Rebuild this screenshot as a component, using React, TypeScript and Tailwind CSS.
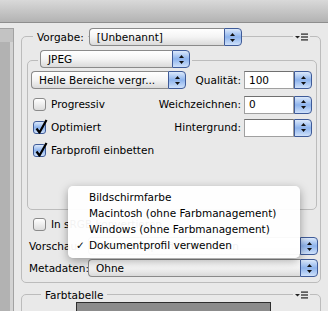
import React from 'react';

const Arrows = () => (
  <svg width="5" height="9" viewBox="0 0 5 9">
    <path d="M2.5 0 L5 3 L0 3 Z" fill="#111" />
    <path d="M0 6 L5 6 L2.5 9 Z" fill="#111" />
  </svg>
);

const ArrowBtn = () => (
  <div className="w-[18px] h-full flex items-center justify-center rounded-r-[4px] border border-[#3f5b98] bg-gradient-to-b from-[#dce9fb] via-[#8db3ec] to-[#cfe1fa]">
    <Arrows />
  </div>
);

function Select({ label, className }: { label: string; className: string }) {
  return (
    <div className={`flex h-[18px] ${className}`}>
      <div className="flex-1 flex items-center pl-[7px] rounded-l-[4px] border border-r-0 border-[#8a8a8a] bg-gradient-to-b from-white via-[#f4f4f4] to-[#dadada] whitespace-nowrap overflow-hidden">
        {label}
      </div>
      <ArrowBtn />
    </div>
  );
}

function Field({ label, value }: { label: string; value: string }) {
  return (
    <div className="flex items-center gap-[3px]">
      <span>{label}</span>
      <div className="flex h-[18px]">
        <div className="w-[50px] bg-white border border-[#a0a0a0] border-t-[#707070] pl-[4px] flex items-center">
          {value}
        </div>
        <ArrowBtn />
      </div>
    </div>
  );
}

function Checkbox({ label, checked }: { label: string; checked?: boolean }) {
  return (
    <div className="flex items-center ml-[2px]">
      {checked ? (
        <div className="relative w-[13px] h-[13px] rounded-[3px] border border-[#3f5b98] bg-gradient-to-b from-[#dce9fb] via-[#8db3ec] to-[#cfe1fa]">
          <svg className="absolute left-0 top-0 overflow-visible" width="13" height="13" viewBox="0 0 13 13">
            <path d="M2.5 6.5 L5.5 10.5 L12.5 -2" stroke="#000" strokeWidth="2.2" fill="none" strokeLinejoin="round" />
          </svg>
        </div>
      ) : (
        <div className="w-[13px] h-[13px] rounded-[3px] border border-[#8a8a8a] bg-gradient-to-b from-white to-[#dcdcdc]" />
      )}
      <span className="ml-[5px]">{label}</span>
    </div>
  );
}

const MenuIcon = () => (
  <div className="h-full flex items-center bg-[#e9e9e9] px-[2px]">
    <svg width="13" height="8" viewBox="0 0 13 8">
      <path d="M0 3 H5 L2.5 5.5 Z" fill="#222" />
      <rect x="6" y="0.5" width="7" height="1.2" fill="#222" />
      <rect x="6" y="3.4" width="7" height="1.2" fill="#222" />
      <rect x="6" y="6.3" width="7" height="1.2" fill="#222" />
    </svg>
  </div>
);

export default function App() {
  return (
    <div className="w-[328px] h-[311px] overflow-hidden relative bg-[#e9e9e9] text-black text-[10.5px] leading-none font-['DejaVu_Sans',sans-serif]">
      {/* title strip */}
      <div className="h-[23px] bg-gradient-to-b from-[#d9d9d9] to-[#b3b3b3] border-b border-[#8e8e8e]" />

      <div className="flex h-[288px]">
        {/* left panel edge */}
        <div className="w-[14px] pt-[5px]">
          <div className="h-full bg-[#c3c3c3] border-t border-r border-[#a2a2a2] pt-[13px]">
            <div className="h-full bg-[#b2b2b2] border-r-[3px] border-[#d3d3d3]" />
          </div>
        </div>
        <div className="w-[7px]" />

        <div className="w-[300px]">
          {/* Vorgabe group */}
          <div className="mt-[13px] h-[247px] border border-[#bcbcbc] rounded-[5px] flex flex-col">
            <div className="-mt-[9px] h-[18px] flex items-center pl-[11px]">
              <span className="h-full flex items-center bg-[#e9e9e9] px-[4px]">Vorgabe:</span>
              <Select label="[Unbenannt]" className="w-[153px] ml-[1px]" />
              <div className="flex-1" />
              <MenuIcon />
              <div className="w-[10px]" />
            </div>

            {/* JPEG group */}
            <div className="mt-[14px] ml-[5px] mr-[3px] h-[150px] border border-[#bcbcbc] rounded-[5px]">
              <div className="-mt-[11px] h-[18px] flex pl-[10px]">
                <div className="bg-[#e9e9e9] px-[2px] flex">
                  <Select label="JPEG" className="w-[150px]" />
                </div>
              </div>
              <div className="mt-[2px] pl-[3px] pr-[4px] flex flex-col">
                <div className="h-[20px] flex items-center justify-between">
                  <Select label="Helle Bereiche vergr..." className="w-[155px]" />
                  <Field label="Qualität:" value="100" />
                </div>
                <div className="mt-[3px] h-[23px] flex items-center justify-between">
                  <Checkbox label="Progressiv" />
                  <Field label="Weichzeichnen:" value="0" />
                </div>
                <div className="h-[23px] flex items-center justify-between">
                  <Checkbox label="Optimiert" checked />
                  <Field label="Hintergrund:" value="" />
                </div>
                <div className="h-[23px] flex items-center justify-between">
                  <Checkbox label="Farbprofil einbetten" checked />
                </div>
              </div>
            </div>

            <div className="mt-[8px] pl-[9px] h-[13px] flex items-center">
              <Checkbox label="In sRGB konvertieren" />
            </div>
            <div className="mt-[6px] pl-[7px] pr-[2px] flex items-center">
              <span className="w-[59px]">Vorschau:</span>
              <Select label="Dokumentprofil verwenden" className="flex-1" />
            </div>
            <div className="mt-[4px] pl-[7px] pr-[2px] flex items-center">
              <span className="w-[59px]">Metadaten:</span>
              <Select label="Ohne" className="flex-1" />
            </div>
          </div>

          {/* Farbtabelle group */}
          <div className="mt-[11px] h-[40px] border border-[#bcbcbc] rounded-[5px]">
            <div className="-mt-[7px] h-[14px] flex items-center pl-[19px]">
              <span className="h-full flex items-center bg-[#e9e9e9] px-[4px]">Farbtabelle</span>
              <div className="flex-1" />
              <MenuIcon />
              <div className="w-[10px]" />
            </div>
            <div className="ml-[54px] w-[195px] h-[20px] bg-[#8c8c8c] border border-[#2e2e2e]" />
          </div>
        </div>
      </div>

      {/* open popup menu */}
      <div className="absolute left-[68px] top-[186px] w-[232px] h-[72px] rounded-[5px] bg-white/95 shadow-[0_3px_10px_rgba(0,0,0,0.35)] pt-[3px]">
        {['Bildschirmfarbe', 'Macintosh (ohne Farbmanagement)', 'Windows (ohne Farbmanagement)', 'Dokumentprofil verwenden'].map((item, i) => (
          <div key={item} className="h-[16px] flex items-center">
            <span className="w-[21px] pl-[8px]">{i === 3 ? '✓' : ''}</span>
            <span>{item}</span>
          </div>
        ))}
      </div>
    </div>
  );
}
